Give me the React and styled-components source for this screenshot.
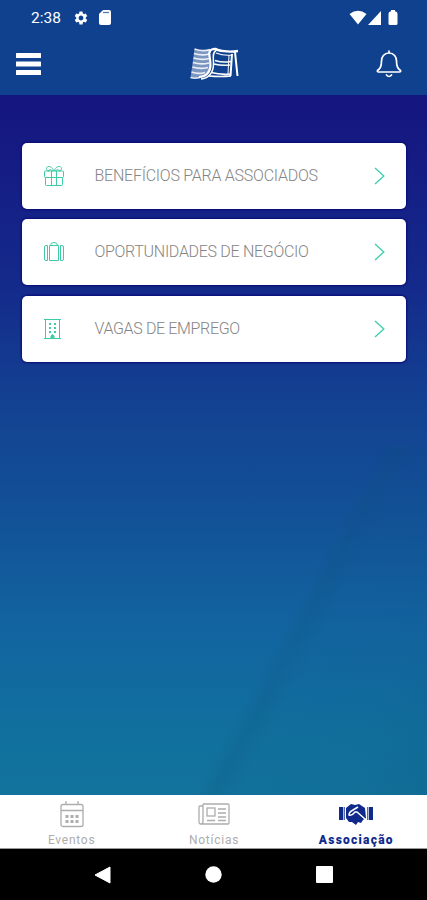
import React, { useState } from 'react';
import styled, { createGlobalStyle } from 'styled-components';
import { MdSettings } from 'react-icons/md';

const GlobalStyle = createGlobalStyle`
* {
box-sizing: border-box;
}
body {
margin: 0;
font-family: Roboto, "Liberation Sans", sans-serif;
}
button {
border: 0;
padding: 0;
background: none;
font: inherit;
}
svg {
display: block;
flex: none;
}
`

const Screen = styled.div`
width: 427px;
height: 900px;
display: flex;
flex-direction: column;
overflow: hidden;
`

const Header = styled.header`
height: 95px;
flex: none;
background-color: #10418f;
color: #fff;
`

const StatusBar = styled.div`
height: 35px;
padding: 0 29px 0 31px;
display: flex;
align-items: center;
justify-content: space-between;
`

const StatusGroup = styled.div`
display: flex;
align-items: center;
gap: ${props => props.$gap};
`

const Clock = styled.span`
width: 31px;
font-size: 15.5px;
line-height: 18px;
`

const Toolbar = styled.div`
height: 58px;
padding: 0 25px 0 16px;
display: grid;
grid-template-columns: 174px 50px 1fr;
align-items: center;
`

const ToolbarButton = styled.button`
justify-self: ${props => props.$side};
`

const Content = styled.main`
height: 700px;
flex: none;
padding: 48px 21px 0 22px;
display: flex;
flex-direction: column;
gap: 10.3px;
background:
linear-gradient(118deg, transparent 62%, rgba(12, 80, 120, 0.2) 65%, rgba(12, 80, 120, 0.05) 69%, rgba(12, 80, 120, 0.08) 84%, rgba(12, 80, 120, 0.2) 100%) 0 100% / 100% 350px no-repeat,
linear-gradient(180deg, #15157f 0%, #151c84 10%, #142b8b 28%, #133f91 42%, #125197 60%, #1264a0 76%, #11709e 91%, #12739c 100%);
`

const Card = styled.button`
width: 100%;
height: 66px;
flex: none;
padding: 0 21.5px 0 21px;
display: flex;
align-items: center;
border-radius: 5px;
background-color: #fff;
box-shadow: 0 0 2px 1px #080b78;
text-align: left;
`

const CardIcon = styled.span`
width: 51.5px;
color: #3ecba5;
`

const CardTitle = styled.span`
flex: 1;
font-size: 16px;
font-weight: 300;
line-height: 20px;
letter-spacing: ${props => props.$spacing};
color: #858585;
white-space: nowrap;
`

const TabBar = styled.nav`
height: 54px;
flex: none;
display: grid;
grid-template-columns: repeat(3, 1fr);
background-color: #fff;
border-bottom: 1px solid #999;
`

const Tab = styled.button`
display: flex;
flex-direction: column;
align-items: center;
color: ${props => props.$active ? '#102a8c' : '#adadad'};
`

const TabIcon = styled.span`
height: 38px;
padding-left: 1px;
display: flex;
align-items: center;
`

const TabLabel = styled.span`
padding-left: 1px;
font-size: 12px;
line-height: 14px;
font-weight: ${props => props.$active ? 900 : 400};
letter-spacing: ${props => props.$active ? '1.25px' : '0.75px'};
`

const SystemBar = styled.div`
height: 51px;
flex: none;
padding: 0 94px;
display: flex;
align-items: center;
justify-content: space-between;
background-color: #000;
`

const CardIconSvg = ({ children }) => (
    <svg width="22" height="22" viewBox="0 0 22 22" fill="none" stroke="currentColor" strokeWidth="1">
        {children}
    </svg>
);

const GiftIcon = () => (
    <CardIconSvg>
        <rect x="1.5" y="6" width="19" height="6.5" rx="1" />
        <path d="M2.5 12.5V19.5Q2.5 20.5 3.5 20.5H18.5Q19.5 20.5 19.5 19.5V12.5M8.5 6V20.5M13.5 6V20.5" />
        <path d="M11 6C9 1 4 0 3.5 3.5C3.5 5 4.5 6 6 6M11 6C13 1 18 0 18.5 3.5C18.5 5 17.5 6 16 6M5 6Q7 3 10 6M12 6Q15 3 17 6" />
    </CardIconSvg>
);

const SuitcaseIcon = () => (
    <CardIconSvg>
        <path d="M4.5 4.5H3Q1.5 4.5 1.5 6V18Q1.5 19.5 3 19.5H4.5ZM17.5 4.5H19Q20.5 4.5 20.5 6V18Q20.5 19.5 19 19.5H17.5Z" />
        <path d="M6.5 4.5H15.5V19.5H6.5ZM7.5 4.5Q7.5 1.5 11 1.5T14.5 4.5" />
    </CardIconSvg>
);

const BuildingIcon = () => (
    <CardIconSvg>
        <path d="M1 1.5H18M2.5 1.5V20.5M16.5 1.5V20.5M1 20.5H18" />
        <path d="M7 5V15M12 5V15" strokeWidth="2" strokeDasharray="2 2" />
        <path d="M8 20.5V18Q9.5 15 11 18V20.5Z" fill="currentColor" />
    </CardIconSvg>
);

const ChevronIcon = () => (
    <svg width="11" height="18" viewBox="0 0 11 18" fill="none" stroke="#42d0ae" strokeWidth="1.4">
        <path d="M1 1L9.8 9L1 17" />
    </svg>
);

const MenuIcon = () => (
    <svg width="25" height="22" viewBox="0 0 25 22" fill="#fff">
        <rect width="25" height="5" rx="0.5" />
        <rect y="8.5" width="25" height="5" rx="0.5" />
        <rect y="17" width="25" height="5" rx="0.5" />
    </svg>
);

const BellIcon = () => (
    <svg width="26" height="28" viewBox="0 0 26 28" fill="none" stroke="#fff" strokeWidth="1.7" strokeLinejoin="round" strokeLinecap="round">
        <path d="M13 1V3M13 3C8 3 5.5 7 5.5 11C5.5 17 4 18.5 1.5 20.5Q1 22 2.5 22H23.5Q25 22 24.5 20.5C22 18.5 20.5 17 20.5 11C20.5 7 18 3 13 3Z" />
        <path d="M10.5 25Q13 28 15.5 25" />
    </svg>
);

// waving flag with the S curve over it
const Logo = () => (
    <svg width="50" height="34" viewBox="0 0 50 34" fill="none" stroke="#fff">
        <path d="M4.5 2Q13 5 20 2L20 11L20 22Q15 31 8 31L0.5 31Z" fill="#fff" fillOpacity="0.45" stroke="none" />
        <g strokeWidth="1.7" opacity="0.85">
            <path d="M4.5 2Q13 5 20 2.5M4 6.5Q12 9 19 7M3.5 11Q12 13.5 19 11.5M3 15.5Q11 18 19 16M2.5 20Q10 22.5 18 20.5M1.5 25Q8 27.5 15 25.5M0.5 30.5Q5 32 10 30.5" />
        </g>
        <path d="M27 2C21 1 18.5 4 19.5 9C20.5 15 22 22 17 27Q14 30 9 30" strokeWidth="2.2" />
        <path d="M26 4C22 5 23.5 11 23.5 17C23.5 25 19 31.5 11 32" strokeWidth="1.5" />
        <path d="M24 2Q36 6 48 4" strokeWidth="2.4" />
        <path d="M26 6Q34 9 42 8" strokeWidth="1.2" />
        <path d="M25 13.5Q33 16 41 14.5M24 17Q32 19 40 18" strokeWidth="1.5" />
        <path d="M21 25.5Q31 28 41 27M19 29Q30 30 41 29" strokeWidth="1.7" />
        <path d="M42 7L40.5 29M45 5L47.5 29" strokeWidth="2" />
        <path d="M39 8L38 27" strokeWidth="1" />
    </svg>
);

const SdCardIcon = () => (
    <svg width="12" height="15" viewBox="0 0 12 15">
        <path d="M4 0H10Q12 0 12 2V13Q12 15 10 15H2Q0 15 0 13V4Z" fill="#fff" />
        <path d="M4 2.5H10" stroke="#10418f" strokeOpacity="0.7" strokeWidth="1.3" />
    </svg>
);

const SignalIcons = () => (
    <svg width="50" height="16" viewBox="0 0 50 16" fill="#fff">
        <path d="M1.5 4Q10 -2.5 18.5 4L10 14.5Z" />
        <path d="M20 15L33 1V15Z" />
        <path d="M43 0H47V1.5H48Q49.5 2 49.5 4V13.5Q49.5 15 48 15H42Q40.5 15 40.5 13.5V4Q40.5 2 42 1.5H43Z" />
    </svg>
);

const CalendarIcon = () => (
    <svg width="24" height="28" viewBox="0 0 24 28" fill="none" stroke="currentColor" strokeWidth="1.3">
        <rect x="1" y="4.5" width="22" height="22" rx="2" />
        <path d="M1 10.5H23M6 1V4.5M18 1V4.5" />
        <path d="M5.5 16.5H18.5M5.5 21.5H18.5" strokeWidth="3" strokeDasharray="3 2" />
    </svg>
);

const NewsIcon = () => (
    <svg width="32" height="22" viewBox="0 0 32 22" fill="none" stroke="currentColor" strokeWidth="1.3">
        <path d="M5 1H30Q31 1 31 2V20Q31 21 30 21H3Q1 21 1 19V4Q1 3 2 3H5M5 1V18Q5 21 3 21" />
        <rect x="9" y="5" width="8" height="8" />
        <path d="M20 6H28M20 10H28M20 14H28M9 17.5H17M20 17.5H28" />
    </svg>
);

const HandshakeIcon = () => (
    <svg width="34" height="22" viewBox="0 0 34 22" fill="currentColor">
        <rect x="0" y="4" width="4" height="13" />
        <rect x="4.7" y="4" width="1" height="13" />
        <rect x="28.3" y="4" width="1" height="13" />
        <rect x="30" y="4" width="4" height="13" />
        <path d="M7 5L12 1L16 2L20 1L26 5L27 15L24 17L22 20L19 19L17 22L13 19L10 19L7 15Z" />
        <path d="M19 4L14 7Q10 9 10 12Q13 13 16 9L18 9L26 16" fill="none" stroke="#fff" strokeWidth="1.5" />
    </svg>
);

const cards = [
    { title: 'BENEFÍCIOS PARA ASSOCIADOS', Icon: GiftIcon, spacing: '-0.25px' },
    { title: 'OPORTUNIDADES DE NEGÓCIO', Icon: SuitcaseIcon, spacing: '-0.3px' },
    { title: 'VAGAS DE EMPREGO', Icon: BuildingIcon, spacing: '-0.35px' },
];

const tabs = [
    { label: 'Eventos', Icon: CalendarIcon },
    { label: 'Notícias', Icon: NewsIcon },
    { label: 'Associação', Icon: HandshakeIcon },
];

const App = () => {
    const [active, setActive] = useState('Associação');

    return (
        <Screen>
            <GlobalStyle />
            <Header>
                <StatusBar>
                    <StatusGroup $gap="10.5px">
                        <Clock>2:38</Clock>
                        <MdSettings size={16} />
                        <SdCardIcon />
                    </StatusGroup>
                    <SignalIcons />
                </StatusBar>
                <Toolbar>
                    <ToolbarButton $side="start" aria-label="Menu"><MenuIcon /></ToolbarButton>
                    <Logo />
                    <ToolbarButton $side="end" aria-label="Notificações"><BellIcon /></ToolbarButton>
                </Toolbar>
            </Header>
            <Content>
                {cards.map(({ title, Icon, spacing }) => (
                    <Card key={title}>
                        <CardIcon><Icon /></CardIcon>
                        <CardTitle $spacing={spacing}>{title}</CardTitle>
                        <ChevronIcon />
                    </Card>
                ))}
            </Content>
            <TabBar>
                {tabs.map(({ label, Icon }) => (
                    <Tab key={label} $active={active === label} onClick={() => setActive(label)}>
                        <TabIcon><Icon /></TabIcon>
                        <TabLabel $active={active === label}>{label}</TabLabel>
                    </Tab>
                ))}
            </TabBar>
            <SystemBar>
                <svg width="17" height="18" viewBox="0 0 17 18"><path d="M16 1V17L1 9Z" fill="#fff" stroke="#fff" strokeLinejoin="round" /></svg>
                <svg width="17" height="17" viewBox="0 0 17 17"><circle cx="8.5" cy="8.5" r="8.2" fill="#fff" /></svg>
                <svg width="17" height="17" viewBox="0 0 17 17"><rect width="17" height="17" rx="1" fill="#fff" /></svg>
            </SystemBar>
        </Screen>
    );
};

export default App;
